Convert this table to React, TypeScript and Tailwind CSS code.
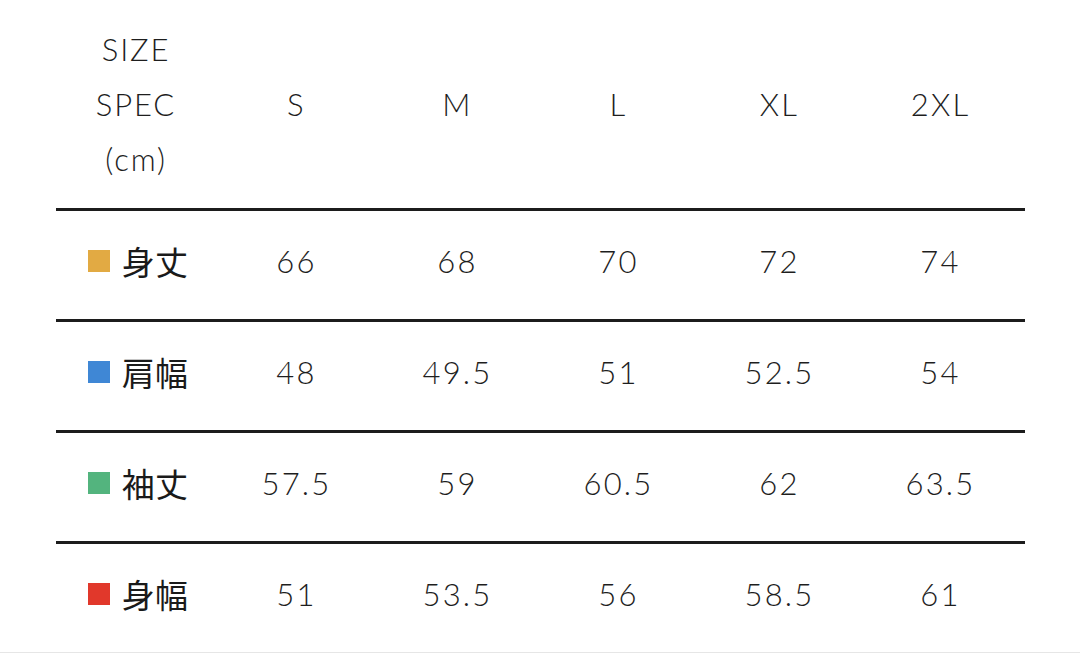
const sizes = ['S', 'M', 'L', 'XL', '2XL'];

const rows = [
  { label: '身丈', color: 'bg-[#e2aa43]', values: ['66', '68', '70', '72', '74'] },
  { label: '肩幅', color: 'bg-[#3f87d5]', values: ['48', '49.5', '51', '52.5', '54'] },
  { label: '袖丈', color: 'bg-[#53b47e]', values: ['57.5', '59', '60.5', '62', '63.5'] },
  { label: '身幅', color: 'bg-[#e1382b]', values: ['51', '53.5', '56', '58.5', '61'] },
];

const latin = "font-['Lato','Noto_Sans_CJK_JP',sans-serif]";

export default function App() {
  return (
    <div className={`w-[1080px] h-[653px] bg-white text-[#1e1e1e] font-light ${latin} flex flex-col`}>
      <div className="pl-[56px] flex-1">
        <div className="w-[969px]">
          <div className="grid grid-cols-[160px_repeat(5,161px)] h-[208px] items-center">
            <div className="flex flex-col items-center text-[31px] leading-[55px] tracking-[0.06em]">
              <span>SIZE</span>
              <span>SPEC</span>
              <span>(cm)</span>
            </div>
            {sizes.map((s) => (
              <div key={s} className="text-center text-[31px] tracking-[0.07em]">
                {s}
              </div>
            ))}
          </div>
          {rows.map((row) => (
            <div
              key={row.label}
              className="grid grid-cols-[160px_repeat(5,161px)] h-[111px] items-center border-t-[3px] border-[#1c1c1c] pb-[8px]"
            >
              <div className="flex items-center justify-center gap-[12px] pl-[4px]">
                <span className={`w-[22px] h-[22px] ${row.color}`} />
                <span className="font-['Noto_Sans_CJK_JP',sans-serif] font-normal text-[33px] leading-none tracking-[0.01em] text-[#1a1a1a]">
                  {row.label}
                </span>
              </div>
              {row.values.map((v, i) => (
                <div key={i} className="text-center text-[31px] tracking-[0.07em]">
                  {v}
                </div>
              ))}
            </div>
          ))}
        </div>
      </div>
      <div className="h-[4px] bg-[#e6e6e6]" />
    </div>
  );
}
